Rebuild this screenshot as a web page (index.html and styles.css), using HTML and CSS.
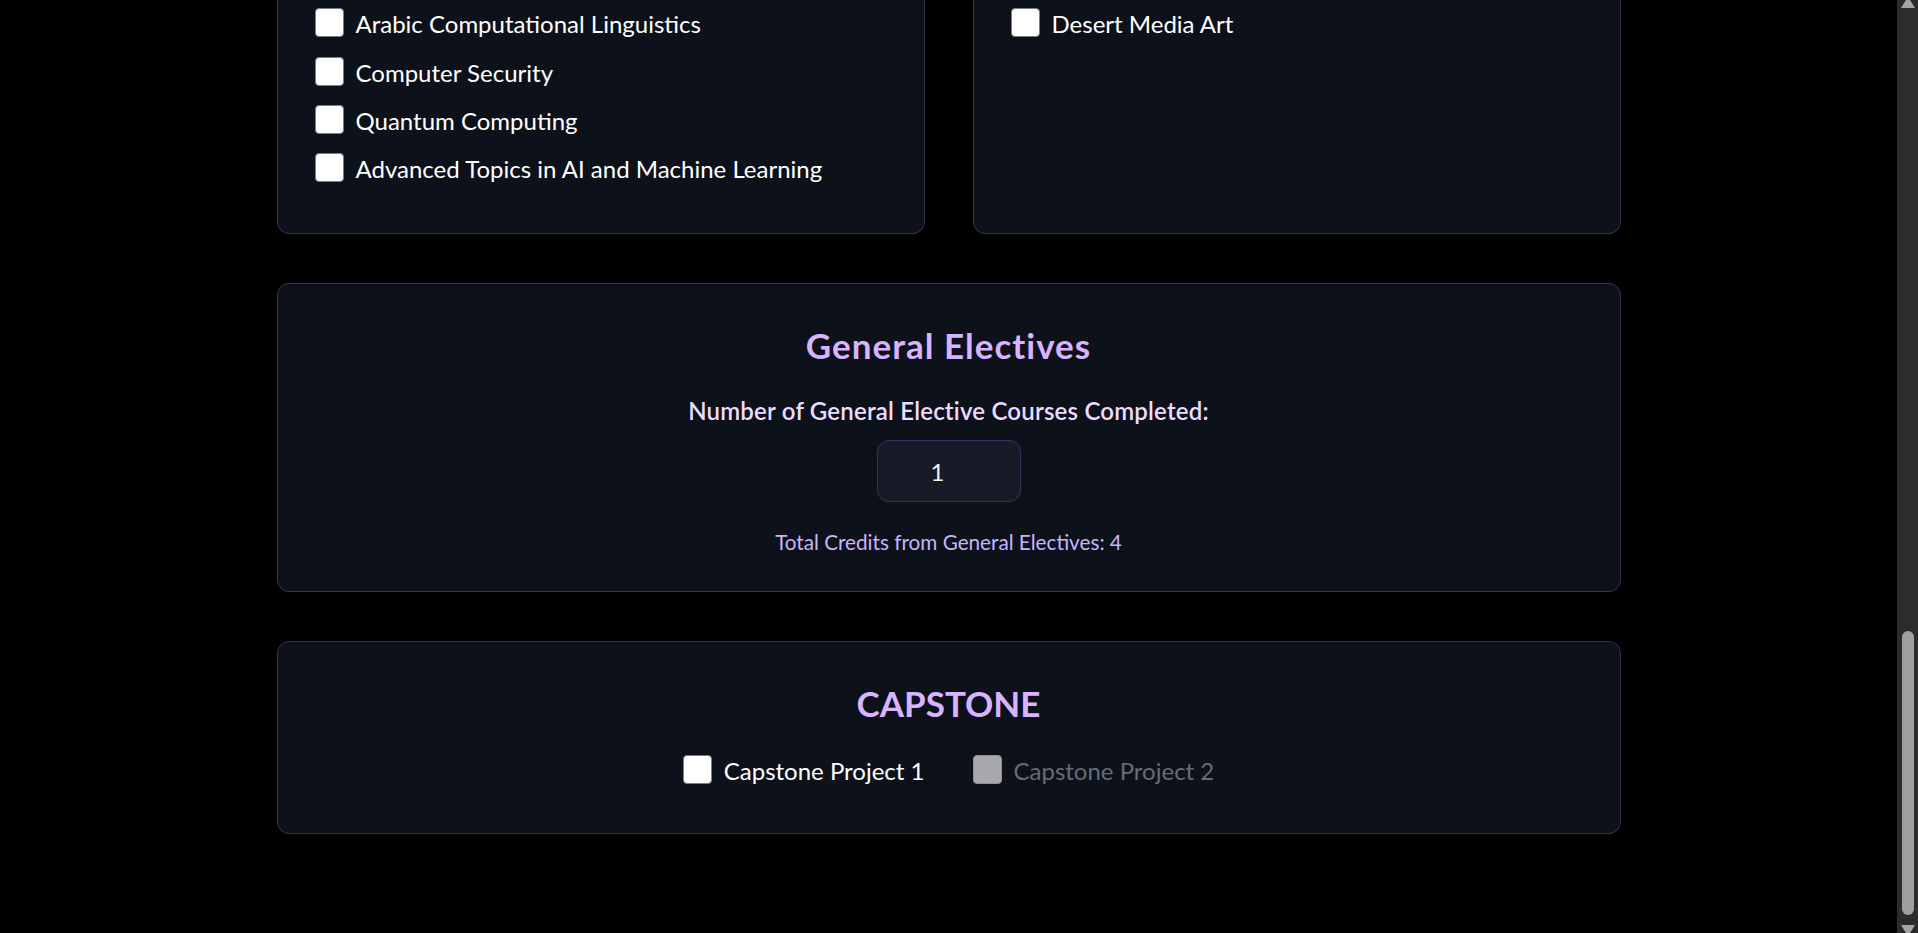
FILE: index.html
```html
<!DOCTYPE html>
<html lang="en">
<head>
<meta charset="utf-8">
<title>Course Tracker</title>
<link rel="stylesheet" href="styles.css">
</head>
<body>
<div class="screen">
  <main class="viewport">
    <div class="container">
      <div class="grid-two">
        <section class="card card-list">
          <label class="check-row"><input type="checkbox" class="cb"><span>Arabic Computational Linguistics</span></label>
          <label class="check-row"><input type="checkbox" class="cb"><span>Computer Security</span></label>
          <label class="check-row"><input type="checkbox" class="cb"><span>Quantum Computing</span></label>
          <label class="check-row"><input type="checkbox" class="cb"><span>Advanced Topics in AI and Machine Learning</span></label>
        </section>
        <section class="card card-list">
          <label class="check-row"><input type="checkbox" class="cb"><span>Desert Media Art</span></label>
        </section>
      </div>

      <section class="card card-center general">
        <h2 class="card-title card-title-wide">General Electives</h2>
        <label class="field-label" for="ge-count">Number of General Elective Courses Completed:</label>
        <input id="ge-count" class="num-input" type="text" value="1">
        <p class="total">Total Credits from General Electives: 4</p>
      </section>

      <section class="card card-center capstone">
        <h2 class="card-title">CAPSTONE</h2>
        <div class="cap-row">
          <label class="check-row"><input type="checkbox" class="cb"><span>Capstone Project 1</span></label>
          <label class="check-row disabled"><input type="checkbox" class="cb" disabled><span>Capstone Project 2</span></label>
        </div>
      </section>
    </div>
  </main>
  <div class="scrollbar">
    <div class="sb-btn sb-up">
      <svg width="21" height="18" viewBox="0 0 21 18"><polygon points="4,8 18,8 11,-3.2" fill="#a3a3a3"/></svg>
    </div>
    <div class="sb-track"><div class="sb-thumb"></div></div>
    <div class="sb-btn sb-down">
      <svg width="21" height="18" viewBox="0 0 21 18"><polygon points="4,10 18,10 11,21.2" fill="#a3a3a3"/></svg>
    </div>
  </div>
</div>
</body>
</html>
```

FILE: styles.css
```css
* { box-sizing: border-box; }

html, body {
  margin: 0;
  padding: 0;
  height: 100%;
  background: #000;
  overflow: hidden;
}

body {
  font-family: Lato, "Open Sans", "Liberation Sans", sans-serif;
  color: #fff;
}

.screen {
  display: flex;
  height: 933px;
  width: 100%;
}

.viewport {
  flex: 1;
  height: 100%;
  overflow: hidden;
  display: flex;
  flex-direction: column;
  justify-content: flex-end;
  padding-bottom: 99px;
}

.container {
  width: 1344px;
  margin: 0 auto;
  display: flex;
  flex-direction: column;
  gap: 49px;
  flex-shrink: 0;
}

.grid-two {
  display: grid;
  grid-template-columns: 1fr 1fr;
  gap: 48px;
}

.card {
  background: #0d111a;
  border: 1px solid #392e58;
  border-radius: 12px;
}

.card-list {
  display: flex;
  flex-direction: column;
  gap: 19.3px;
  padding: 120px 36px 50.8px 37px;
}

.check-row {
  display: flex;
  align-items: center;
  gap: 12px;
  height: 29px;
  font-size: 24px;
  line-height: 29px;
  color: #ffffff;
  white-space: nowrap;
}

.check-row span {
  padding-top: 2px;
}

.cb {
  appearance: none;
  -webkit-appearance: none;
  margin: 0;
  width: 29px;
  height: 29px;
  flex: 0 0 29px;
  background: #ffffff;
  border: 1.5px solid #7d7d7d;
  border-radius: 4px;
}

.cb:disabled {
  background: #a8a8ac;
  border-color: #909094;
}

.check-row.disabled {
  color: #676c78;
}

.card-center {
  display: flex;
  flex-direction: column;
  align-items: center;
  padding: 40px 40px 36px;
}

.card-title {
  margin: 0;
  font-size: 35px;
  line-height: 42px;
  font-weight: 700;
  color: #d8b4fe;
}

.card-title-wide {
  letter-spacing: 1px;
}

.field-label {
  margin-top: 30px;
  font-size: 24px;
  line-height: 29px;
  font-weight: 600;
  letter-spacing: 0.2px;
  color: #ecdcff;
}

.num-input {
  margin-top: 15px;
  width: 144px;
  height: 62px;
  background: #181b27;
  border: 1px solid #3d325f;
  border-radius: 12px;
  color: #f2f2f2;
  font-family: Lato, "Open Sans", "Liberation Sans", sans-serif;
  font-size: 24px;
  text-align: center;
  padding: 0 23px 0 1px;
  outline: none;
}

.total {
  margin: 27px 0 0;
  font-size: 20.7px;
  line-height: 26px;
  color: #c8b4fc;
}

.capstone {
  padding-bottom: 49px;
}

.cap-row {
  margin-top: 31px;
  display: flex;
  gap: 48px;
}

.scrollbar {
  width: 21px;
  flex: 0 0 21px;
  height: 100%;
  background: #2c2c2c;
  display: flex;
  flex-direction: column;
}

.sb-btn {
  height: 18px;
  flex: 0 0 18px;
  overflow: hidden;
}

.sb-btn svg { display: block; }

.sb-track {
  flex: 1;
  display: flex;
  flex-direction: column;
  justify-content: flex-end;
}

.sb-thumb {
  height: 284px;
  width: 12px;
  margin-left: 5px;
  border-radius: 6px;
  background: #9f9f9f;
}
```
